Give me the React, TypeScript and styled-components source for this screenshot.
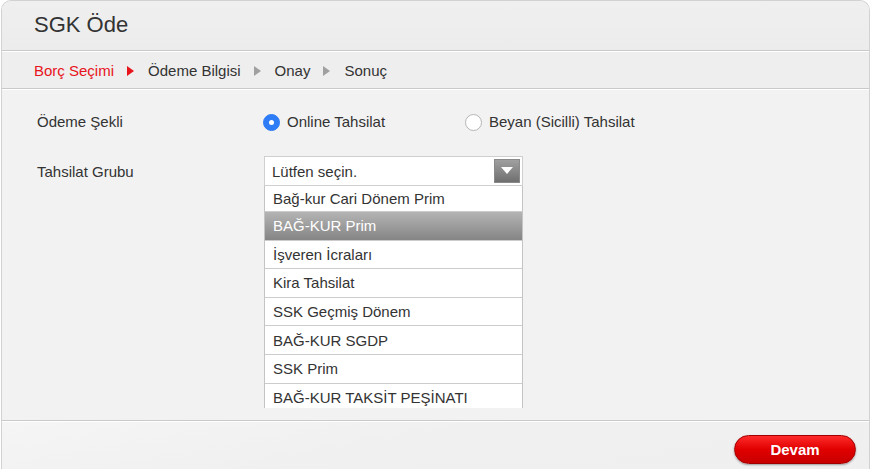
import React, { useState } from "react";
import styled, { createGlobalStyle } from "styled-components";

const STEPS = ["Borç Seçimi", "Ödeme Bilgisi", "Onay", "Sonuç"];

const GROUPS = [
  "Bağ-kur Cari Dönem Prim",
  "BAĞ-KUR Prim",
  "İşveren İcraları",
  "Kira Tahsilat",
  "SSK Geçmiş Dönem",
  "BAĞ-KUR SGDP",
  "SSK Prim",
  "BAĞ-KUR TAKSİT PEŞİNATI",
];

const App = () => {
  const [method, setMethod] = useState<string>("online");
  const [hovered] = useState<number>(1);

  return (
    <>
      <GlobalStyle />
      <Panel>
        <Header>
          <Title>SGK Öde</Title>
        </Header>

        <Steps>
          {STEPS.map((s, i) => (
            <React.Fragment key={s}>
              <Step $active={i === 0}>{s}</Step>
              {i < STEPS.length - 1 && <StepArrow $active={i === 0} />}
            </React.Fragment>
          ))}
        </Steps>

        <FormArea>
          <Row>
            <Label>Ödeme Şekli</Label>
            <Options>
              <Option onClick={() => setMethod("online")}>
                <Radio $checked={method === "online"} />
                Online Tahsilat
              </Option>
              <Option onClick={() => setMethod("beyan")}>
                <Radio $checked={method === "beyan"} />
                Beyan (Sicilli) Tahsilat
              </Option>
            </Options>
          </Row>

          <Row>
            <Label>Tahsilat Grubu</Label>
            <SelectWrap>
              <SelectBox>
                <span>Lütfen seçin.</span>
                <SelectButton>
                  <svg width="12" height="8" viewBox="0 0 12 8">
                    <path d="M0 0 L12 0 L6 7 Z" fill="#fff" />
                  </svg>
                </SelectButton>
              </SelectBox>
              <Menu>
                {GROUPS.map((g, i) => (
                  <MenuItem key={g} $selected={i === hovered}>
                    {g}
                  </MenuItem>
                ))}
              </Menu>
            </SelectWrap>
          </Row>
        </FormArea>

        <Footer>
          <DevamButton>Devam</DevamButton>
        </Footer>
      </Panel>
    </>
  );
};

export default App;

/*//////////////////////////////////////////////////////////////////////////
/////////////////////////////// S T Y L E  /////////////////////////////////
//////////////////////////////////////////////////////////////////////////*/

const GlobalStyle = createGlobalStyle`
  html, body {
    margin: 0;
    padding: 0;
    background: #ffffff;
    overflow: hidden;
    font-family: "Liberation Sans", Arial, sans-serif;
  }
`;

const Panel = styled.div`
  width: 867px;
  margin-left: 1px;
  min-height: 520px;
  border: 1px solid #d2d2d2;
  border-bottom: none;
  border-radius: 10px 10px 0 0;
  background: #f2f2f2;
  overflow: hidden;
`;

const Header = styled.div`
  height: 49px;
  display: flex;
  align-items: center;
  padding-left: 32px;
  background: linear-gradient(#efefef, #ececec);
  border-bottom: 1px solid #c9c9c9;
  box-shadow: 0 1px 0 #ffffff;
`;

const Title = styled.h1`
  margin: 0 0 2px;
  font-size: 22px;
  font-weight: normal;
  color: #333333;
`;

const Steps = styled.div`
  height: 37px;
  margin-top: 1px;
  display: flex;
  align-items: center;
  padding: 1px 0 0 32px;
  box-sizing: border-box;
  background: #eeeeee;
  border-bottom: 1px solid #c9c9c9;
  box-shadow: 0 1px 0 #ffffff;
`;

const Step = styled.span<{ $active: boolean }>`
  font-size: 15px;
  color: ${(p) => (p.$active ? "#e8141b" : "#333333")};
`;

const StepArrow = styled.span<{ $active: boolean }>`
  width: 0;
  height: 0;
  margin: 1px 14px 0 13px;
  border-top: 5px solid transparent;
  border-bottom: 5px solid transparent;
  border-left: 7px solid ${(p) => (p.$active ? "#e8141b" : "#a0a0a0")};
`;

const FormArea = styled.div`
  height: 310px;
  margin-top: 1px;
  padding: 20px 0 0 35px;
  display: flex;
  flex-direction: column;
  gap: 24px;
  border-bottom: 1px solid #c9c9c9;
  box-shadow: 0 1px 0 #ffffff;
`;

const Row = styled.div`
  display: grid;
  grid-template-columns: 226px 1fr;
  align-items: center;
`;

const Label = styled.span`
  font-size: 15px;
  color: #333333;
`;

const Options = styled.div`
  display: flex;
  align-items: center;
  height: 22px;
`;

const Option = styled.label`
  display: flex;
  align-items: center;
  gap: 7px;
  min-width: 202px;
  font-size: 15px;
  color: #333333;
  cursor: pointer;
`;

const Radio = styled.span<{ $checked: boolean }>`
  width: 17px;
  height: 17px;
  margin-top: 3px;
  box-sizing: border-box;
  border-radius: 50%;
  display: flex;
  align-items: center;
  justify-content: center;
  background: ${(p) => (p.$checked ? "#2e7cf6" : "#ffffff")};
  border: 1px solid ${(p) => (p.$checked ? "#2e7cf6" : "#b5b5b5")};

  &::after {
    content: "";
    width: 5px;
    height: 5px;
    border-radius: 50%;
    background: #ffffff;
    display: ${(p) => (p.$checked ? "block" : "none")};
  }
`;

const SelectWrap = styled.div`
  position: relative;
  width: 259px;
  margin-left: 1px;
`;

const SelectBox = styled.div`
  height: 30px;
  box-sizing: border-box;
  display: flex;
  align-items: center;
  justify-content: space-between;
  padding: 0 2px 0 7px;
  background: #ffffff;
  border: 1px solid #cfcfcf;
  font-size: 15px;
  color: #333333;
`;

const SelectButton = styled.span`
  width: 26px;
  height: 24px;
  display: flex;
  align-items: center;
  justify-content: center;
  background: linear-gradient(#a0a0a0, #6f6f6f);
  border: 1px solid #8a8a8a;
  box-sizing: border-box;
`;

const Menu = styled.div`
  position: absolute;
  top: 30px;
  left: 0;
  width: 259px;
  height: 222px;
  overflow: hidden;
  background: #ffffff;
  border-left: 1px solid #c4c4c4;
  border-right: 1px solid #c4c4c4;
  box-sizing: border-box;
`;

const MenuItem = styled.div<{ $selected: boolean }>`
  height: 28.6px;
  box-sizing: border-box;
  display: flex;
  align-items: center;
  padding-left: 8px;
  font-size: 15px;
  border-bottom: 1px solid #cccccc;
  color: ${(p) => (p.$selected ? "#ffffff" : "#333333")};
  background: ${(p) =>
    p.$selected ? "linear-gradient(#b4b4b4, #858585)" : "#ffffff"};

  &:first-child {
    height: 26px;
  }
`;

const Footer = styled.div`
  display: flex;
  justify-content: flex-end;
  padding: 13px 13px 0 0;
  margin-top: 1px;
  background: linear-gradient(170deg, #f5f5f5 0%, #f0f0f0 40%, #efefef 100%);
  height: 60px;
`;

const DevamButton = styled.button`
  width: 122px;
  height: 29px;
  border-radius: 15px;
  border: 1px solid #a30000;
  background: linear-gradient(#ff2a2a, #e00000 50%, #c80000);
  box-shadow: 0 1px 2px rgba(0, 0, 0, 0.35);
  color: #ffffff;
  font-family: "Liberation Sans", Arial, sans-serif;
  font-size: 15px;
  font-weight: bold;
  cursor: pointer;
`;
